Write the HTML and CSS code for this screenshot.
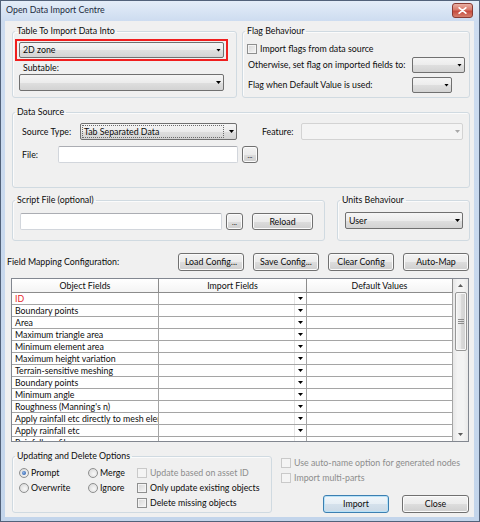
FILE: index.html
```html
<!DOCTYPE html>
<html>
<head>
<meta charset="utf-8">
<title>Open Data Import Centre</title>
<link rel="stylesheet" href="styles.css">
</head>
<body>
<div class="window">
  <div class="titlebar">
    <span class="title">Open Data Import Centre</span>
    <div class="close"><svg width="9" height="7" viewBox="0 0 9 7"><path d="M1.2 0.8 L7.8 6.2 M7.8 0.8 L1.2 6.2" stroke="#fff" stroke-width="1.7" stroke-linecap="round"/></svg></div>
  </div>
  <div class="client">
    <div class="top-row">
      <fieldset class="group g-table">
        <legend>Table To Import Data Into</legend>
        <div class="gbody gb-table">
          <div class="highlight"><div class="combo c-zone"><span>2D zone</span></div></div>
          <div class="lbl-sub">Subtable:</div>
          <div class="combo c-sub"></div>
        </div>
      </fieldset>
      <fieldset class="group g-flag">
        <legend>Flag Behaviour</legend>
        <div class="gbody gb-flag">
          <div class="flag-row r1"><span class="check"></span><span>Import flags from data source</span></div>
          <div class="flag-row r2"><span class="flag-label">Otherwise, set flag on imported fields to:</span><div class="combo c-flag1"></div></div>
          <div class="flag-row r3"><span class="flag-label">Flag when Default Value is used:</span><div class="combo c-flag2"></div></div>
        </div>
      </fieldset>
    </div>

    <fieldset class="group g-source">
      <legend>Data Source</legend>
      <div class="gbody gb-source">
        <div class="src-row">
          <span class="lbl-src">Source Type:</span>
          <div class="combo c-src"><span class="focus">Tab Separated Data</span></div>
          <span class="lbl-feature">Feature:</span>
          <div class="combo disabled c-feature"></div>
        </div>
        <div class="src-row r-file">
          <span class="lbl-file">File:</span>
          <div class="input in-file"></div>
          <div class="btn btn-dots">...</div>
        </div>
      </div>
    </fieldset>

    <div class="mid-row">
      <fieldset class="group g-script">
        <legend>Script File (optional)</legend>
        <div class="gbody gb-script">
          <div class="input in-script"></div>
          <div class="btn btn-dots2">...</div>
          <div class="btn btn-reload">Reload</div>
        </div>
      </fieldset>
      <fieldset class="group g-units">
        <legend>Units Behaviour</legend>
        <div class="gbody gb-units">
          <div class="combo c-units"><span>User</span></div>
        </div>
      </fieldset>
    </div>

    <div class="field-row">
      <span class="field-label">Field Mapping Configuration:</span>
      <div class="btn btn-cfg">Load Config...</div>
      <div class="btn btn-cfg">Save Config...</div>
      <div class="btn btn-cfg">Clear Config</div>
      <div class="btn btn-cfg">Auto-Map</div>
    </div>

    <div class="grid-table">
      <div class="cols">
        <div class="trow thead">
          <div class="th">Object Fields</div>
          <div class="th">Import Fields</div>
          <div class="th">Default Values</div>
        </div>
        <div class="trow"><div class="td red">ID</div><div class="td imp"><span class="dd"></span></div><div class="td"></div></div>
        <div class="trow"><div class="td">Boundary points</div><div class="td imp"><span class="dd"></span></div><div class="td"></div></div>
        <div class="trow"><div class="td">Area</div><div class="td imp"><span class="dd"></span></div><div class="td"></div></div>
        <div class="trow"><div class="td">Maximum triangle area</div><div class="td imp"><span class="dd"></span></div><div class="td"></div></div>
        <div class="trow"><div class="td">Minimum element area</div><div class="td imp"><span class="dd"></span></div><div class="td"></div></div>
        <div class="trow"><div class="td">Maximum height variation</div><div class="td imp"><span class="dd"></span></div><div class="td"></div></div>
        <div class="trow"><div class="td">Terrain-sensitive meshing</div><div class="td imp"><span class="dd"></span></div><div class="td"></div></div>
        <div class="trow"><div class="td">Boundary points</div><div class="td imp"><span class="dd"></span></div><div class="td"></div></div>
        <div class="trow"><div class="td">Minimum angle</div><div class="td imp"><span class="dd"></span></div><div class="td"></div></div>
        <div class="trow"><div class="td">Roughness (Manning's n)</div><div class="td imp"><span class="dd"></span></div><div class="td"></div></div>
        <div class="trow"><div class="td">Apply rainfall etc directly to mesh elements</div><div class="td imp"><span class="dd"></span></div><div class="td"></div></div>
        <div class="trow"><div class="td">Apply rainfall etc</div><div class="td imp"><span class="dd"></span></div><div class="td"></div></div>
        <div class="trow"><div class="td">Rainfall profile</div><div class="td imp"><span class="dd"></span></div><div class="td"></div></div>
      </div>
      <div class="vscroll">
        <div class="sb-btn"><span class="sb-up"></span></div>
        <div class="sb-thumb"><span class="grip"></span><span class="grip"></span><span class="grip"></span></div>
        <div class="sb-btn sb-bottom"><span class="sb-down"></span></div>
      </div>
    </div>

    <div class="bottom-row">
      <fieldset class="group g-update">
        <legend>Updating and Delete Options</legend>
        <div class="gbody gb-update">
          <div class="opt"><span class="radio on"></span>Prompt</div>
          <div class="opt"><span class="radio"></span>Merge</div>
          <div class="opt off"><span class="check dis"></span>Update based on asset ID</div>
          <div class="opt"><span class="radio"></span>Overwrite</div>
          <div class="opt"><span class="radio"></span>Ignore</div>
          <div class="opt"><span class="check"></span>Only update existing objects</div>
          <div class="opt"></div>
          <div class="opt"></div>
          <div class="opt"><span class="check"></span>Delete missing objects</div>
        </div>
      </fieldset>
      <div class="right-area">
        <div class="ropt"><span class="check dis"></span>Use auto-name option for generated nodes</div>
        <div class="ropt"><span class="check dis"></span>Import multi-parts</div>
        <div class="actions">
          <div class="btn btn-import">Import</div>
          <div class="btn btn-close">Close</div>
        </div>
      </div>
    </div>
  </div>
</div>
</body>
</html>
```

FILE: styles.css
```css
* { box-sizing: border-box; }
html, body { margin: 0; padding: 0; background: #c4d5eb; }
body {
  font-family: Lato, "Liberation Sans", Arial, sans-serif;
  font-size: 8.8px;
  line-height: 12px;
  color: #0c0c0c;
}
.window {
  width: 480px;
  height: 522px;
  border: 1px solid #52627a;
  background: linear-gradient(180deg, #e4edf8 0, #cddcf0 20px, #c3d5eb 100%);
  padding: 0 5px 4px 4px;
  display: flex;
  flex-direction: column;
  overflow: hidden;
}
.titlebar {
  height: 20px;
  flex: none;
  display: flex;
  justify-content: space-between;
  align-items: flex-start;
}
.title { margin: 3px 0 0 1px; color: #1c2b40; }
.close {
  width: 21px;
  height: 15px;
  margin: 2px 1px 0 0;
  border: 1px solid #8a3b33;
  border-radius: 3px;
  background: linear-gradient(180deg, #eab0a4 0, #d8796a 45%, #c54a3d 55%, #d6806d 100%);
  display: flex;
  align-items: center;
  justify-content: center;
}
.close svg { display: block; }
.client {
  flex: 1;
  background: #f0f0f0;
  padding: 4px 0 0 7px;
  display: flex;
  flex-direction: column;
}

/* group boxes */
.group {
  margin: 0;
  padding: 0;
  min-width: 0;
  border: 1px solid #d0dae1;
  border-radius: 3px;
  box-shadow: inset 1px 1px 0 #fbfbfb;
}
.group > legend {
  margin-left: 2px;
  padding: 0 2px;
  height: 12px;
  line-height: 12px;
}

/* controls */
.combo {
  display: flex;
  align-items: center;
  border: 1px solid #707070;
  border-radius: 2px;
  background: linear-gradient(180deg, #f5f5f5 0, #ececec 50%, #dfdfdf 51%, #d3d3d3 100%);
  padding: 0 2px 0 3px;
  white-space: nowrap;
}
.combo::after {
  content: "";
  flex: none;
  margin-left: auto;
  width: 5px;
  height: 3px;
  background: #000;
  clip-path: polygon(0 0, 100% 0, 50% 100%);
}
.combo.disabled {
  border-color: #d3d3d3;
  background: #f4f4f4;
}
.combo.disabled::after { background: #a8a8a8; }
.input {
  background: #fff;
  border: 1px solid #d2d6dc;
  border-top-color: #abadb3;
  border-radius: 2px;
}
.btn {
  display: flex;
  align-items: center;
  justify-content: center;
  border: 1px solid #707070;
  border-radius: 3px;
  background: linear-gradient(180deg, #f3f3f3 0, #ebebeb 50%, #dddddd 51%, #cfcfcf 100%);
  box-shadow: inset 0 0 0 1px #fbfbfb;
  white-space: nowrap;
}
.check {
  flex: none;
  width: 10px;
  height: 10px;
  border: 1px solid #8e8f8f;
  background: linear-gradient(135deg, #d6d6d6 0, #f6f6f6 100%);
  box-shadow: inset 0 0 0 1px #f4f4f4;
  margin-right: 3px;
}
.check.dis {
  border-color: #c9c9c9;
  background: #f4f4f4;
  box-shadow: none;
}
.radio {
  flex: none;
  width: 10px;
  height: 10px;
  border-radius: 50%;
  border: 1px solid #8e8f8f;
  background: radial-gradient(circle at 60% 60%, #f8f8f8 0, #e2e2e2 60%, #cfcfcf 100%);
  margin-right: 2px;
  display: flex;
  align-items: center;
  justify-content: center;
}
.radio.on::after {
  content: "";
  width: 4px;
  height: 4px;
  border-radius: 50%;
  background: radial-gradient(circle at 40% 40%, #8fb4e6 0, #2a5fae 80%);
}

/* top row */
.top-row { display: flex; gap: 5px; height: 73px; flex: none; }
.g-table { width: 225px; height: 73px; }
.gb-table { padding: 2px 0 0 2px; }
.highlight {
  width: 213px;
  height: 22px;
  border: 2px solid #f01e1e;
  padding: 1px 2px;
}
.c-zone { width: 205px; height: 16px; }
.lbl-sub { margin: 1px 0 0 8px; height: 12px; }
.c-sub { margin-left: 4px; width: 205px; height: 17px; }

.g-flag { width: 228px; height: 73px; }
.gb-flag { padding: 6px 0 0 4px; }
.flag-row { display: flex; align-items: center; white-space: nowrap; }
.r1 { height: 12px; }
.r2 { margin-top: 2px; height: 16px; }
.r3 { margin-top: 4px; height: 16px; }
.flag-label { width: 165px; padding-left: 1px; }
.c-flag1 { width: 53px; height: 16px; }
.c-flag2 { width: 40px; height: 16px; }

/* data source */
.group.g-source { margin-top: 8px; width: 458px; height: 82px; flex: none; }
.gb-source { padding: 5px 0 0 9px; }
.src-row { display: flex; align-items: center; height: 17px; }
.r-file { margin-top: 6px; }
.lbl-src { width: 58px; }
.c-src { width: 157px; height: 17px; padding-left: 1px; }
.focus {
  width: 142px;
  height: 13px;
  line-height: 11px;
  border: 1px dotted #6b6b6b;
  padding-left: 1px;
}
.lbl-feature { margin-left: 25px; width: 39px; }
.c-feature { width: 162px; height: 17px; }
.lbl-file { width: 36px; }
.in-file { width: 180px; height: 17px; }
.btn-dots { margin-left: 4px; width: 16px; height: 17px; font-size: 7px; line-height: 8px; }

/* script / units */
.mid-row { display: flex; margin-top: 6px; height: 47px; flex: none; }
.g-script { width: 313px; height: 47px; }
.gb-script { padding: 7px 0 0 7px; display: flex; }
.in-script { width: 202px; height: 17px; }
.btn-dots2 { margin-left: 4px; width: 17px; height: 17px; font-size: 7px; line-height: 8px; }
.btn-reload { margin-left: 9px; width: 61px; height: 17px; }
.group.g-units { margin-left: 12px; width: 133px; height: 47px; }
.gb-units { padding: 6px 0 0 7px; }
.c-units { width: 118px; height: 17px; }

/* field mapping */
.field-row {
  display: flex;
  align-items: center;
  margin-top: 12px;
  height: 18px;
  width: 457px;
  flex: none;
}
.field-label { flex: 1; margin-left: -5px; }
.btn-cfg { width: 66px; height: 18px; margin-left: 9px; }

/* table */
.grid-table {
  margin: 7px 0 0 -1px;
  width: 458px;
  height: 164px;
  flex: none;
  border: 1px solid #828790;
  background: #fff;
  display: flex;
}
.cols { width: 441px; overflow: hidden; }
.trow { display: grid; grid-template-columns: 147px 148px 146px; }
.th {
  height: 14px;
  line-height: 13px;
  text-align: center;
  border-right: 1px solid #8c8c8c;
  border-bottom: 1px solid #8c8c8c;
  background: linear-gradient(180deg, #ffffff 0, #f4f4f4 100%);
}
.td {
  height: 12px;
  line-height: 11px;
  padding-left: 3px;
  border-right: 1px solid #a5a5a5;
  border-bottom: 1px solid #a5a5a5;
  overflow: hidden;
  white-space: nowrap;
}
.td.red { color: #e8262b; }
.td.imp { padding: 0; display: flex; justify-content: flex-end; }
.dd {
  width: 12px;
  height: 11px;
  border-left: 1px solid #e4e4e4;
  display: flex;
  align-items: center;
  justify-content: center;
}
.dd::before {
  content: "";
  width: 5px;
  height: 3px;
  background: #000;
  clip-path: polygon(0 0, 100% 0, 50% 100%);
}
.vscroll {
  width: 15px;
  background: linear-gradient(90deg, #e6e6e6 0, #f3f3f3 30%, #f3f3f3 70%, #e9e9e9 100%);
  display: flex;
  flex-direction: column;
  align-items: center;
}
.sb-btn {
  width: 15px;
  height: 13px;
  flex: none;
  display: flex;
  align-items: center;
  justify-content: center;
}
.sb-bottom { margin-top: auto; }
.sb-up, .sb-down {
  width: 5px;
  height: 3px;
  background: #5c5c5c;
}
.sb-up { clip-path: polygon(50% 0, 100% 100%, 0 100%); }
.sb-down { clip-path: polygon(0 0, 100% 0, 50% 100%); }
.sb-thumb {
  width: 12px;
  height: 59px;
  margin-left: 1px;
  border: 1px solid #979797;
  border-radius: 2px;
  background: linear-gradient(90deg, #f4f4f4 0, #e8e8e8 50%, #dadada 51%, #d2d2d2 100%);
  box-shadow: inset 0 0 0 1px #f8f8f8;
  display: flex;
  flex-direction: column;
  align-items: center;
  justify-content: center;
  gap: 1px;
}
.grip { width: 6px; height: 1px; background: #8c8c8c; }

/* bottom */
.bottom-row { display: flex; margin-top: 8px; flex: none; }
.g-update { width: 260px; height: 63px; }
.gb-update {
  padding: 3px 0 0 6px;
  display: grid;
  grid-template-columns: 69px 49px auto;
  grid-auto-rows: 15px;
}
.opt { display: flex; align-items: center; white-space: nowrap; }
.opt.off { color: #8d8d8d; }
.right-area { margin-left: 9px; width: 188px; padding-top: 7px; }
.ropt {
  height: 12px;
  display: flex;
  align-items: center;
  color: #8d8d8d;
  white-space: nowrap;
}
.ropt + .ropt { margin-top: 3px; }
.actions { display: flex; justify-content: flex-end; gap: 13px; margin-top: 11px; }
.btn-import {
  width: 66px;
  height: 18px;
  border-color: #3c7fb1;
  background: linear-gradient(180deg, #f1f6fa 0, #e6eef5 50%, #d5e1ec 51%, #cbd9e6 100%);
  box-shadow: inset 0 0 0 1px #b8e2f8;
}
.btn-close { width: 67px; height: 18px; }
```
